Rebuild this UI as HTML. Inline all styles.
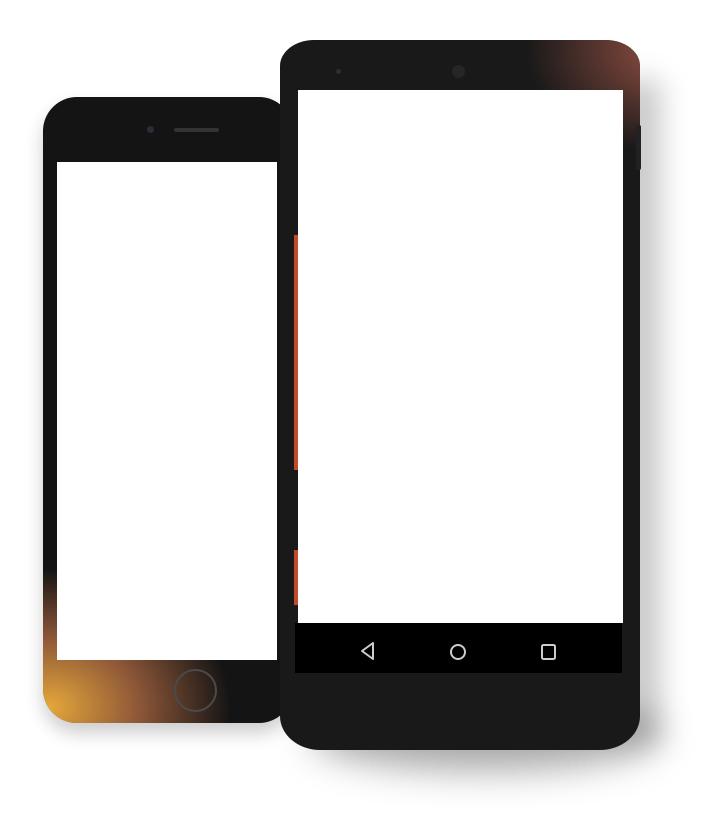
<!DOCTYPE html>
<html><head><style>
body{margin:0;width:709px;height:818px;background:#fff;position:relative;overflow:hidden}
div{position:absolute;box-sizing:border-box}
</style></head><body>
<!-- left phone -->
<div style="left:43px;top:97px;width:250px;height:626px;background:#141414;border-radius:34px;overflow:hidden;box-shadow:0 10px 18px rgba(0,0,0,.2)">
  <div style="left:-40px;top:470px;width:230px;height:200px;background:radial-gradient(ellipse at 20% 70%,rgba(240,175,60,.95),rgba(220,130,80,.6) 35%,rgba(20,20,20,0) 70%)"></div>
</div>
<div style="left:147px;top:126px;width:7px;height:7px;border-radius:50%;background:#2a2e36"></div>
<div style="left:174px;top:128px;width:45px;height:4px;border-radius:2px;background:#333"></div>
<div style="left:57px;top:162px;width:220px;height:498px;background:#fff"></div>
<div style="left:174px;top:669px;width:43px;height:43px;border-radius:50%;border:2px solid #4a4a4a"></div>
<!-- right phone shadow -->
<div style="left:310px;top:700px;width:350px;height:70px;border-radius:50%;background:rgba(0,0,0,.35);filter:blur(18px)"></div>
<div style="left:620px;top:80px;width:40px;height:660px;background:rgba(0,0,0,.22);filter:blur(14px)"></div>
<!-- right phone -->
<div style="left:280px;top:40px;width:360px;height:710px;background:#191919;border-radius:34px 34px 40px 40px/26px 26px 34px 34px;overflow:hidden">
  <div style="left:220px;top:-30px;width:180px;height:160px;background:radial-gradient(ellipse at 95% 25%,rgba(170,90,75,.85),rgba(25,25,25,0) 60%)"></div>
</div>
<div style="left:636px;top:125px;width:5px;height:45px;background:#222;border-radius:2px"></div>
<div style="left:336px;top:69px;width:5px;height:5px;border-radius:50%;background:#2c2f38"></div>
<div style="left:452px;top:65px;width:13px;height:13px;border-radius:50%;background:#262626"></div>
<div style="left:294px;top:235px;width:4px;height:235px;background:#c04a2a"></div>
<div style="left:294px;top:550px;width:4px;height:55px;background:#c04a2a"></div>
<div style="left:298px;top:90px;width:325px;height:533px;background:#fff"></div>
<div style="left:295px;top:623px;width:327px;height:50px;background:#000"></div>
<svg style="position:absolute;left:0;top:0" width="709" height="818">
<path d="M373 643 L362 651 L373 659 Z" fill="none" stroke="#ccc" stroke-width="2" stroke-linejoin="round"/>
<circle cx="458" cy="652" r="7" fill="none" stroke="#ccc" stroke-width="2"/>
<rect x="542" y="645" width="13" height="14" rx="1.5" fill="none" stroke="#ccc" stroke-width="2"/>
</svg>
</body></html>
